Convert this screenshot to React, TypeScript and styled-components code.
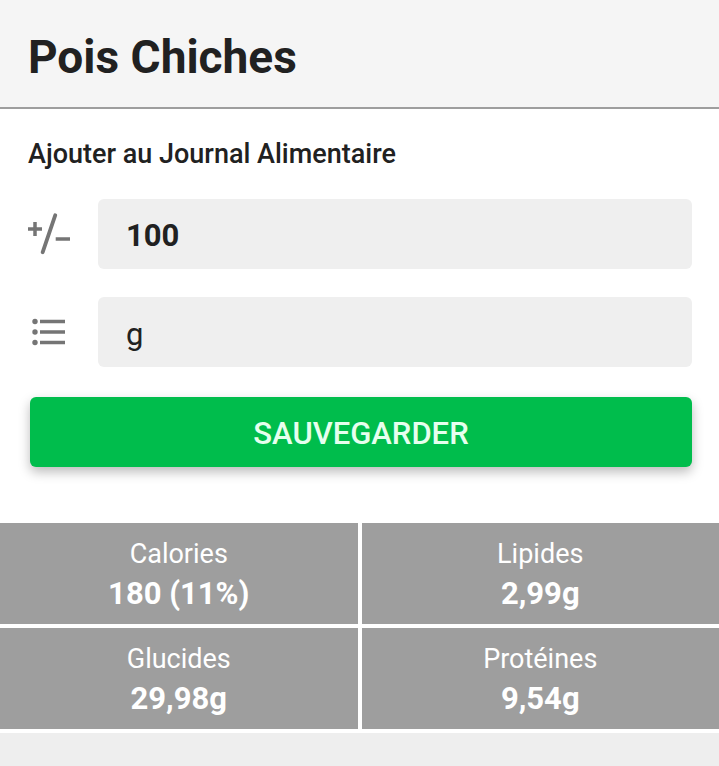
import React from "react";
import styled, { createGlobalStyle } from "styled-components";

const GlobalStyle = createGlobalStyle`
  * { box-sizing: border-box; }
  body {
    margin: 0;
    background: #ffffff;
    color: #212121;
    font-family: Roboto, "Liberation Sans", sans-serif;
  }
`;

const Page = styled.main`
  display: flex;
  flex-direction: column;
  min-height: 100vh;
`;

const Header = styled.header`
  padding: 32px 28px 24px;
  background: #f5f5f5;
  border-bottom: 2px solid #9e9e9e;
`;

const Title = styled.h1`
  margin: 0;
  font-size: 46px;
  line-height: 51px;
  font-weight: 700;
`;

const Form = styled.form`
  display: flex;
  flex-direction: column;
  padding: 28px 27px 56px 28px;
`;

const Heading = styled.h2`
  margin: 0 0 28px;
  font-size: 27px;
  line-height: 34px;
  font-weight: 500;
`;

const Field = styled.label`
  display: grid;
  grid-template-columns: 42px 1fr;
  column-gap: 28px;
  align-items: center;
  margin-bottom: 28px;
`;

const Icon = styled.svg`
  display: block;
  width: 42px;
  height: 42px;
  fill: #757575;
  stroke: #757575;
`;

const Input = styled.input<{ $bold?: boolean }>`
  width: 100%;
  height: 70px;
  padding: ${(p) => (p.$bold ? 2 : 4)}px 28px 0;
  border: 0;
  border-radius: 6px;
  background: #efefef;
  color: #212121;
  font: ${(p) => (p.$bold ? 700 : 400)} 31px Roboto, "Liberation Sans", sans-serif;
`;

const SaveButton = styled.button`
  height: 70px;
  margin: 2px 0 0 2px;
  padding: 2px 0 0;
  border: 0;
  border-radius: 6px;
  background: #00bd4c;
  color: #e6ffee;
  font: 500 31px Roboto, "Liberation Sans", sans-serif;
  text-transform: uppercase;
  box-shadow: 0 5px 12px rgba(0, 0, 0, 0.27);
`;

const Facts = styled.dl`
  display: grid;
  grid-template-columns: 1fr 1fr;
  gap: 4px;
  margin: 0 0 4px;
`;

const Fact = styled.div`
  padding: 12px 8px 9px;
  background: #9e9e9e;
  color: #ffffff;
  text-align: center;
`;

const FactName = styled.dt`
  font-size: 27px;
  line-height: 38px;
`;

const FactValue = styled.dd`
  margin: 0;
  font-size: 31px;
  line-height: 42px;
  font-weight: 700;
`;

const Footer = styled.footer`
  flex: 1;
  background: #eeeeee;
`;

const facts = [
  { name: "Calories", value: "180 (11%)" },
  { name: "Lipides", value: "2,99g" },
  { name: "Glucides", value: "29,98g" },
  { name: "Protéines", value: "9,54g" },
];

export default function App() {
  return (
    <>
      <GlobalStyle />
      <Page>
        <Header>
          <Title>Pois Chiches</Title>
        </Header>
        <Form onSubmit={(e) => e.preventDefault()}>
          <Heading>Ajouter au Journal Alimentaire</Heading>
          <Field>
            <Icon viewBox="0 0 42 42" aria-hidden="true">
              <path d="M0 16H14M7 9V23M27.700 26H42" strokeWidth="3.500" />
              <path d="M27.200 2.300L14.700 39.200" strokeWidth="3.800" strokeLinecap="round" />
            </Icon>
            <Input $bold aria-label="Quantité" inputMode="decimal" defaultValue="100" />
          </Field>
          <Field>
            <Icon viewBox="0 0 42 42" aria-hidden="true">
              <g stroke="none">
                <circle cx="7" cy="10.500" r="2.700" />
                <circle cx="7" cy="21" r="2.700" />
                <circle cx="7" cy="31.500" r="2.700" />
              </g>
              <path d="M12 10.500H37M12 21H37M12 31.500H37" strokeWidth="3.500" />
            </Icon>
            <Input aria-label="Unité" defaultValue="g" />
          </Field>
          <SaveButton type="submit">Sauvegarder</SaveButton>
        </Form>
        <Facts>
          {facts.map((f) => (
            <Fact key={f.name}>
              <FactName>{f.name}</FactName>
              <FactValue>{f.value}</FactValue>
            </Fact>
          ))}
        </Facts>
        <Footer />
      </Page>
    </>
  );
}
